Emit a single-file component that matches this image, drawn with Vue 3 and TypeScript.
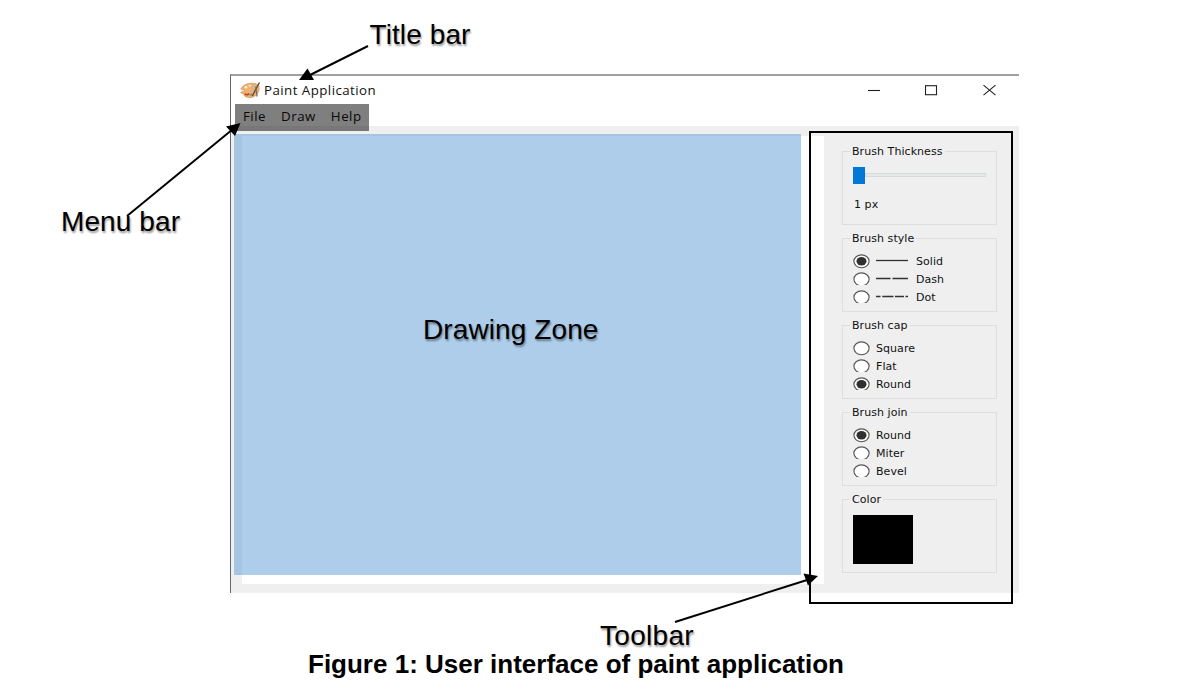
<script setup lang="ts">
interface Option {
  label: string
  checked: boolean
  clipped: boolean
  dash?: string
}
interface Group {
  title: string
  options: Option[]
}

const menus: string[] = ['File', 'Draw', 'Help']

const groups: Group[] = [
  {
    title: 'Brush style',
    options: [
      { label: 'Solid', checked: true, clipped: false, dash: '32 0' },
      { label: 'Dash', checked: false, clipped: true, dash: '14.5 2 15.5 0' },
      { label: 'Dot', checked: false, clipped: true, dash: '4.5 1.8 11.2 1.5 9 1.5 3 0' },
    ],
  },
  {
    title: 'Brush cap',
    options: [
      { label: 'Square', checked: false, clipped: false },
      { label: 'Flat', checked: false, clipped: true },
      { label: 'Round', checked: true, clipped: true },
    ],
  },
  {
    title: 'Brush join',
    options: [
      { label: 'Round', checked: true, clipped: false },
      { label: 'Miter', checked: false, clipped: true },
      { label: 'Bevel', checked: false, clipped: true },
    ],
  },
]
</script>

<template>
  <main class="figure">
    <section class="window">
      <header class="titlebar">
        <svg class="logo" width="21" height="17" viewBox="0 0 21 17">
          <path d="M.8 7C3 2.500 9 .5 15 1.500c4 .8 5 4 3.500 8-1.500 4.500-6 6.500-10 6C6.500 15.200 4 14.500 4 12.700c0-1-2.400-1-3.200-2.200C.3 9.500 4.800 10 5 8.800 5 7.800.5 8 .8 7Z" fill="#ecb273" stroke="#c98646" stroke-width=".6" />
          <circle cx="6" cy="5.300" r="1.300" fill="#fff1d8" />
          <circle cx="9.800" cy="3.800" r="1.200" fill="#f8e3a0" />
          <circle cx="13.500" cy="4.500" r="1.200" fill="#9fc3c8" />
          <circle cx="11" cy="12.800" r="1.300" fill="#8c9c58" />
          <path d="M5 11.700c1 1.500 3 1.400 4-.2" fill="none" stroke="#d43420" stroke-width="1.700" />
          <path d="M19.500.5 14 10.500l-1.500 3.500" fill="none" stroke="#62483c" stroke-width="1.400" />
          <path d="M16 4.500c-.5 4 1 7 1 10" fill="none" stroke="#776760" stroke-width="1.300" />
        </svg>
        <span class="title">Paint Application</span>
        <svg class="controls" width="130" height="14" viewBox="0 0 130 14" fill="none" stroke="#222" stroke-width="1.100">
          <path d="M0 7.500h12" />
          <rect x="57.500" y="2.700" width="11" height="9" />
          <path d="m115.500 2.200 12 10m0-10-12 10" />
        </svg>
      </header>
      <nav class="menubar">
        <span v-for="menu in menus" :key="menu">{{ menu }}</span>
      </nav>
      <div class="body">
        <div class="canvas"></div>
        <aside class="tools">
          <section class="group">
            <h2>Brush Thickness</h2>
            <div class="slider"><i class="thumb"></i><i class="track"></i></div>
            <p class="value">1 px</p>
          </section>
          <section v-for="group in groups" :key="group.title" class="group">
            <h2>{{ group.title }}</h2>
            <div class="options">
              <div v-for="option in group.options" :key="option.label" class="option">
                <svg class="radio" width="17" :height="option.clipped ? 13 : 15" :viewBox="option.clipped ? '0 0 17 13' : '0 0 17 15'">
                  <ellipse cx="8.500" cy="7.300" rx="7.600" ry="6.400" fill="#fff" stroke="#555" stroke-width="1.100" />
                  <ellipse v-if="option.checked" cx="8.500" cy="7.300" rx="5" ry="4.200" fill="#303030" />
                </svg>
                <svg v-if="option.dash" class="sample" width="32" height="3" viewBox="0 0 32 3">
                  <path d="M0 1.500h32" stroke="#333" stroke-width="1.300" :stroke-dasharray="option.dash" />
                </svg>
                <span>{{ option.label }}</span>
              </div>
            </div>
          </section>
          <section class="group">
            <h2>Color</h2>
            <div class="swatch"></div>
          </section>
        </aside>
      </div>
    </section>

    <div class="menu-shade"></div>
    <div class="zone"></div>
    <div class="tool-outline"></div>
    <svg class="arrows" width="1189" height="690" viewBox="0 0 1189 690">
      <g fill="none" stroke="#000" stroke-width="2">
        <path d="M368 46 308 76" />
        <path d="M127 216 233 129" />
        <path d="M675 622 807 580" />
      </g>
      <path d="m299 80 8.500-11.500L314 80Z" />
      <path d="m240.500 123-14.500 3.500 9 9.500Z" />
      <path d="m818 576-14.500-2.500 4.500 12Z" />
    </svg>
    <span class="note note-title">Title bar</span>
    <span class="note note-menu">Menu bar</span>
    <span class="note note-zone">Drawing Zone</span>
    <span class="note note-tools">Toolbar</span>
    <p class="caption">Figure 1: User interface of paint application</p>
  </main>
</template>

<style>
body {
  margin: 0;
  background: #fff;
}
</style>

<style scoped>
.figure {
  position: relative;
  box-sizing: border-box;
  width: 1189px;
  height: 690px;
  padding: 74px 0 0 230px;
  overflow: hidden;
  background: #fff;
  color: #000;
  font-family: "Liberation Sans", Arial, sans-serif;
}
.window {
  box-sizing: border-box;
  display: flex;
  flex-direction: column;
  width: 789px;
  height: 519px;
  border-top: 2px solid #a0a0a0;
  border-left: 1px solid #666;
  background: #fff;
}
.titlebar {
  display: flex;
  align-items: center;
  height: 28px;
  padding-left: 9px;
}
.logo {
  margin-right: 3px;
}
.title {
  font: 13.300px/20px "Open Sans", "Noto Sans", sans-serif;
  letter-spacing: 0.450px;
  color: #111;
}
.controls {
  margin-left: auto;
  margin-right: 21px;
}
.menubar {
  display: flex;
  gap: 15px;
  height: 22px;
  padding-left: 12px;
  font: 13.300px/25px "Open Sans", "Noto Sans", sans-serif;
  letter-spacing: 0.500px;
  color: #111;
}
.body {
  display: flex;
  flex: 1;
  padding: 10px 22px 9px 11px;
  background: #efefef;
}
.canvas {
  width: 582px;
  background: #fff;
}
.tools {
  display: flex;
  flex-direction: column;
  gap: 13px;
  margin-left: 18px;
  padding-top: 15px;
  font: 11px/14px "DejaVu Sans", sans-serif;
  letter-spacing: 0.060px;
  color: #111;
}
.group {
  box-sizing: border-box;
  width: 155px;
  height: 74px;
  border: 1px solid #dedede;
  padding-left: 10px;
}
.group h2 {
  width: max-content;
  margin: -7px 0 0 -3px;
  padding: 0 2px;
  background: #efefef;
  font: inherit;
}
.slider {
  display: flex;
  align-items: center;
  height: 17px;
  margin-top: 8px;
}
.thumb {
  width: 12px;
  height: 17px;
  background: #0078d7;
}
.track {
  box-sizing: border-box;
  width: 121px;
  height: 4px;
  margin-top: -1px;
  border: 1px solid #d7dada;
  background: #e7eaea;
}
.value {
  margin: 14px 0 0 1px;
}
.options {
  margin-top: 7px;
}
.option {
  display: flex;
  align-items: flex-start;
  height: 18px;
  line-height: 17px;
}
.radio {
  margin-top: 1px;
}
.sample {
  margin: 6px 8px 0 6px;
}
.radio + span {
  margin-left: 6px;
}
.swatch {
  width: 60px;
  height: 49px;
  margin-top: 8px;
  background: #000;
}
.menu-shade {
  position: absolute;
  left: 235px;
  top: 104px;
  width: 134px;
  height: 27px;
  background: rgba(0, 0, 0, 0.5);
}
.zone {
  position: absolute;
  left: 234px;
  top: 134px;
  width: 567px;
  height: 441px;
  background: rgba(91, 155, 213, 0.5);
}
.tool-outline {
  position: absolute;
  box-sizing: border-box;
  left: 809px;
  top: 131px;
  width: 204px;
  height: 473px;
  border: 2px solid #000;
}
.arrows {
  position: absolute;
  left: 0;
  top: 0;
}
.note {
  position: absolute;
  font-size: 28px;
  line-height: 32px;
  letter-spacing: 0.100px;
  white-space: nowrap;
  text-shadow: 1px 2px 2px rgba(0, 0, 0, 0.4);
}
.note-title {
  left: 369.500px;
  top: 19px;
}
.note-menu {
  left: 61px;
  top: 206px;
}
.note-zone {
  left: 423px;
  top: 314px;
}
.note-tools {
  left: 600px;
  top: 620px;
  letter-spacing: 0.300px;
}
.caption {
  position: absolute;
  left: 308px;
  top: 649px;
  margin: 0;
  font-size: 26px;
  font-weight: 700;
  line-height: 30px;
  white-space: nowrap;
}
</style>
